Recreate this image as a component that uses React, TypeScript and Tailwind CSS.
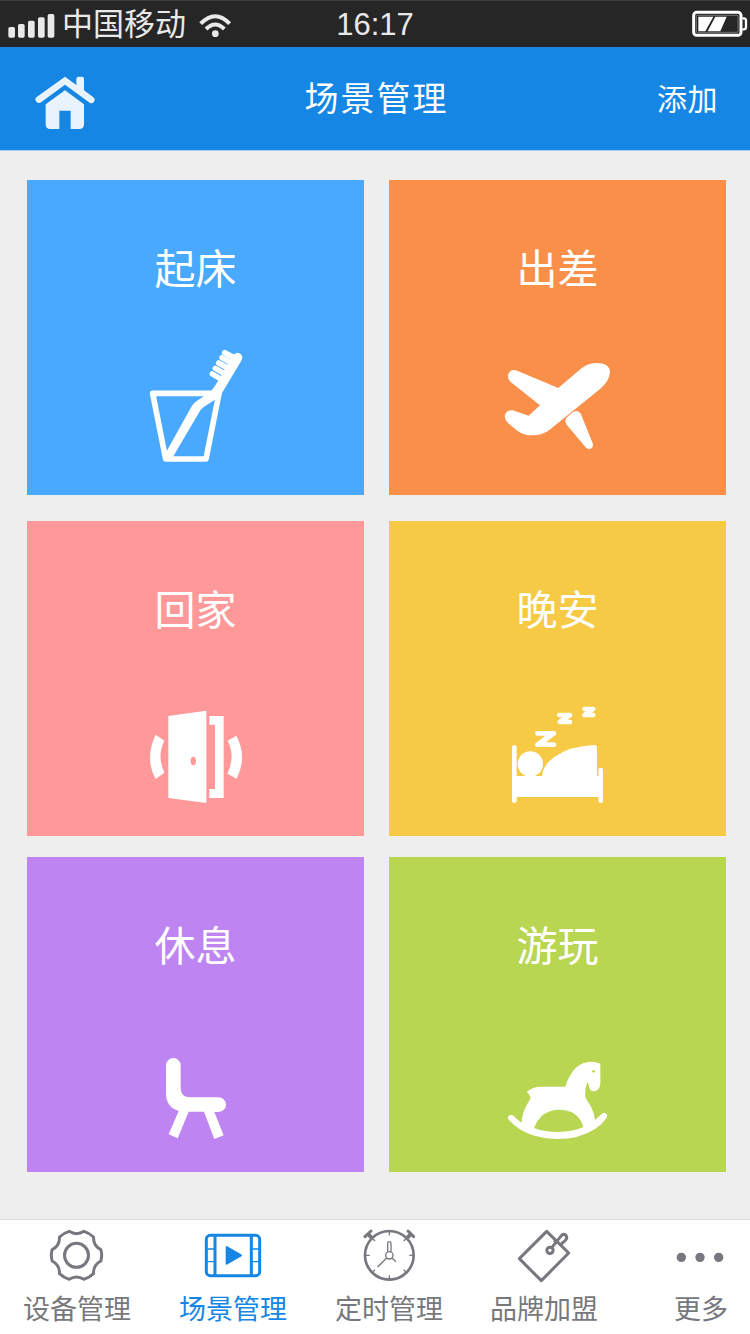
import React from "react";

function SignalIcon() {
  return (
    <svg className="w-12 h-[47px]" viewBox="21 3 144 141" fill="#e9e9e9">
      <rect x="25" y="81" width="20" height="32" rx="5" />
      <rect x="54" y="72" width="20" height="41" rx="5" />
      <rect x="84" y="62" width="20" height="51" rx="5" />
      <rect x="114" y="52" width="20" height="61" rx="5" />
      <rect x="143" y="42" width="20" height="71" rx="5" />
    </svg>
  );
}

function WifiIcon() {
  return (
    <svg className="w-9 h-[47px]" viewBox="591 3 108 141" fill="none" stroke="#e9e9e9" strokeWidth="12">
      <path d="M602 71 Q646 26 689 71" />
      <path d="M618 87 Q646 60 673 87" />
      <circle cx="646" cy="101" r="10" fill="#e9e9e9" stroke="none" />
    </svg>
  );
}

function BatteryIcon() {
  return (
    <svg className="w-[56px] h-[47px]" viewBox="1175 3 168 141">
      <rect x="1180" y="37" width="142" height="69" rx="9" fill="none" stroke="#fff" strokeWidth="9" />
      <rect x="1188" y="46" width="125" height="51" rx="3" fill="none" stroke="#999" strokeWidth="2" />
      <path d="M1326 55h5q6 0 6 7v19q0 7-6 7h-5" fill="none" stroke="#fff" strokeWidth="7" />
      <path d="M1194 50h45l-24 44h-21zM1245 50h34l-19 44h-38z" fill="#fff" />
    </svg>
  );
}

function HomeIcon() {
  return (
    <svg className="w-[60px] h-[56px]" viewBox="106 225 180 168" fill="#e8f3fd">
      <path d="M196 230l34 25v-18q0-7 7-7h10q6 0 6 7v34l28 21q7 6 2 13-5 8-13 3l-74-54-74 54q-8 4-13-4-5-7 2-13z" />
      <path d="M196 271l57 42v60q0 14-14 14h-26v-55h-34v55h-27q-14 0-14-14v-60z" />
    </svg>
  );
}

function BrushIcon() {
  return (
    <svg className="w-[125px] h-[140px]" viewBox="-6 0 375 420" fill="none" stroke="#fff" strokeLinejoin="round" strokeLinecap="round">
      <path d="M53 175H252L213 372H92z" strokeWidth="17" />
      <path d="M84 368L170 214Q176 204 184 199L221 174Q229 168 236 158L251 135L293 62Q300 53 309 53Q320 56 322 66Q322 72 318 79L261 174Q254 185 243 192L205 217L196 226L109 374z" fill="#fff" stroke="none" />
      <path d="M269 53l24 13M261 68l25 14M251 84l25 14M241 100l26 15M232 117l30 18" strokeWidth="16.500" />
    </svg>
  );
}

function PlaneIcon() {
  return (
    <svg className="w-[125px] h-[140px]" viewBox="15 -30 375 420" fill="#fff">
      <path d="M78 76L205 129L268 75Q292 54 318 54Q360 54 360 82Q358 108 331 131L177 256Q157 271 128 271Q103 272 82 257L54 234Q40 219 46 207Q52 194 68 196L116 212L150 181L62 111Q49 98 56 85Q64 72 78 76z" />
      <path d="M231 217L246 203Q263 191 273 208L308 295Q312 307 302 311Q294 314 287 307L230 239Q221 227 231 217z" />
    </svg>
  );
}

function DoorIcon() {
  return (
    <svg className="w-[125px] h-[140px]" viewBox="-6 -57 375 420" fill="#fff">
      <path d="M100 63L214 47V324L100 309z" />
      <path d="M223 63H266V309H223V282H240V89H223z" />
      <path d="M62 119L88 137Q65 184 88 233L62 252Q28 190 62 119z" />
      <path d="M304 122L278 137Q302 184 277 236L305 251Q338 186 304 122z" />
      <ellipse cx="175" cy="198" rx="8" ry="13" fill="#ff9999" />
    </svg>
  );
}

function BedIcon() {
  return (
    <svg className="w-[125px] h-[140px]" viewBox="0 -57 375 420" fill="#fff">
      <circle cx="106" cy="207" r="38" />
      <path d="M51 156q0-6 7-6 7 0 7 6v87h76q2-31 36-56 45-34 121-37 8 0 8 8v85h4v-19q0-6 7-6 7 0 7 6v93q0 7-7 7-7 0-7-7v-11H65v11q0 7-7 7-7 0-7-7z" />
      <g fill="none" stroke="#fff" strokeLinejoin="round" strokeLinecap="round">
        <path d="M127 115H177M127 149H177" strokeWidth="14" />
        <path d="M172 117L132 147" strokeWidth="16" />
        <path d="M193 60H225L194 81H225" strokeWidth="14" />
        <path d="M268 42H295L268 60H295" strokeWidth="13" />
      </g>
    </svg>
  );
}

function ChairIcon() {
  return (
    <svg className="w-[125px] h-[140px]" viewBox="-36 -99 375 420" fill="#fff">
      <path d="M63 61A22 22 0 0 1 107 61V129Q107 157 136 157H221A22 22 0 0 1 221 201H208L236 271L208 282L177 200H131L98 280L71 268L101 198Q63 187 63 145z" />
    </svg>
  );
}

function HorseIcon() {
  return (
    <svg className="w-[125px] h-[140px]" viewBox="0 -99 375 420" fill="#fff">
      <path
        fillRule="evenodd"
        d="M95 141Q113 125 139 125H211Q222 88 243 68Q261 50 291 50Q307 51 316 56V95Q318 125 310 133Q301 141 290 138Q282 133 282 123Q280 114 277 112Q269 130 271 157Q275 166 286 181Q298 203 300 225L321 206Q328 200 334 206Q338 211 335 218Q322 237 300 252Q254 282 186 282Q120 280 77 254Q56 241 41 224Q36 215 43 211Q50 208 56 213Q65 224 80 233Q82 203 94 182Q103 168 107 158Q104 146 95 141zM117 249Q124 230 139 214Q161 194 190 194Q217 195 231 202Q258 217 265 246Q237 260 190 261Q147 261 117 249z"
      />
      <circle cx="296" cy="79" r="4" fill="#b9d653" />
    </svg>
  );
}

function GearIcon() {
  return (
    <svg className="w-20 h-[70px]" viewBox="111 30 240 210" fill="none" stroke="currentColor" strokeWidth="9">
      <g transform="translate(229.500 136)">
        <path
          strokeLinejoin="round"
          d="M73-17Q78 0 73 17Q50 29 51 55Q39 67 22 72Q0 58-22 72Q-39 67-51 55Q-50 29-73 17Q-78 0-73-17Q-50-29-51-55Q-39-67-22-72Q0-58 22-72Q39-67 51-55Q50-29 73-17z"
        />
        <circle r="36" />
      </g>
    </svg>
  );
}

function FilmIcon() {
  return (
    <svg className="w-20 h-[70px]" viewBox="579 30 240 210" fill="none" stroke="currentColor">
      <rect x="619" y="76" width="160" height="121" rx="12" strokeWidth="9" />
      <path d="M645 76v121M754 76v121" strokeWidth="9" />
      <path d="M622 117h20M622 155h20M758 117h20M758 155h20" strokeWidth="4" />
      <path d="M680 111v50l43-25z" fill="currentColor" strokeWidth="6" strokeLinejoin="round" />
    </svg>
  );
}

function ClockIcon() {
  return (
    <svg className="w-20 h-[70px]" viewBox="-3 0 240 210" fill="none" stroke="currentColor">
      <circle cx="118" cy="106" r="73" strokeWidth="8" />
      <path d="M45 50l18-17M174 33l17 17" strokeWidth="9" strokeLinecap="round" />
      <path d="M55 43l10 10M182 43l-10 10" strokeWidth="12" />
      <path d="M118 35v11M118 166v11M48 106h11M178 106h11M69 57l6 6M167 57l-6 6M69 155l6-6M167 155l-6-6" strokeWidth="4" />
      <circle cx="118" cy="106" r="11" strokeWidth="4" />
      <path d="M113 95V70q0-5 5-5t5 5v25" strokeWidth="4" />
      <path d="M110 114l-27 27M126 114l12 11" strokeWidth="4" />
    </svg>
  );
}

function TagIcon() {
  return (
    <svg className="w-20 h-[70px]" viewBox="0 0 240 210" fill="none" stroke="currentColor" strokeWidth="9" strokeLinejoin="round">
      <path d="M46 116L128 34L194 99L112 182z" />
      <circle cx="138" cy="91" r="9.500" />
      <path d="M144 82L172 47Q179 40 186 46Q191 53 185 60L168 76M150 61L160 70" />
    </svg>
  );
}

function MoreIcon() {
  return (
    <svg className="w-20 h-[70px]" viewBox="1026 30 240 210" fill="currentColor">
      <circle cx="1087" cy="142" r="14" />
      <circle cx="1143" cy="142" r="14" />
      <circle cx="1199" cy="142" r="14" />
    </svg>
  );
}

const scenes = [
  { name: "起床", color: "bg-[#48a9ff]", icon: <BrushIcon /> },
  { name: "出差", color: "bg-[#fa8f4a]", icon: <PlaneIcon /> },
  { name: "回家", color: "bg-[#ff9999] mt-[26px]", icon: <DoorIcon /> },
  { name: "晚安", color: "bg-[#f6ca45] mt-[26px]", icon: <BedIcon /> },
  { name: "休息", color: "bg-[#be84f2] mt-[21px]", icon: <ChairIcon /> },
  { name: "游玩", color: "bg-[#b9d653] mt-[21px]", icon: <HorseIcon /> },
];

const tabs = [
  { name: "设备管理", style: "w-[108px] text-[#77787d]", icon: <GearIcon /> },
  { name: "场景管理", style: "w-[108px] text-[#1586e3]", icon: <FilmIcon /> },
  { name: "定时管理", style: "w-[108px] text-[#77787d]", icon: <ClockIcon /> },
  { name: "品牌加盟", style: "w-[108px] -ml-px text-[#77787d]", icon: <TagIcon /> },
  { name: "更多", style: "w-[54px] ml-7 text-[#77787d]", icon: <MoreIcon /> },
];

function App() {
  return (
    <div className="flex flex-col w-[750px] h-[1334px] overflow-hidden bg-[#eeeeee] font-['Liberation_Sans','Noto_Sans_CJK_SC',sans-serif]">
      <div className="flex items-center h-[47px] shrink-0 bg-[#262626] border-t border-[#3c3c3c] text-[#e9e9e9]">
        <div className="flex flex-1 items-center pl-[7px]">
          <SignalIcon />
          <span className="ml-[7px] text-[31px] leading-[47px]">中国移动</span>
          <span className="ml-[11px]">
            <WifiIcon />
          </span>
        </div>
        <span className="pr-[5px] text-[31px] leading-[47px]">16:17</span>
        <div className="flex flex-1 justify-end pr-[2px]">
          <BatteryIcon />
        </div>
      </div>

      <div className="flex items-center h-[104px] shrink-0 bg-[#1586e3] border-b border-[#a9d0f2] text-white">
        <div className="flex-1 pl-[35px] pt-[9px]">
          <HomeIcon />
        </div>
        <h1 className="pt-px text-[34px] leading-[52px] tracking-[2px]">场景管理</h1>
        <div className="flex-1 pt-[3px] pr-8 text-right">
          <button className="text-[30px] leading-[52px] tracking-[0.5px]">添加</button>
        </div>
      </div>

      <div className="grid grid-cols-2 gap-x-[25px] pt-[29px] pl-[27px] pr-6">
        {scenes.map((scene) => (
          <div key={scene.name} className={`flex flex-col items-center h-[315px] pt-[60px] ${scene.color}`}>
            <h3 className="text-[41px] leading-[60px] text-white">{scene.name}</h3>
            <div className="mt-[35px]">{scene.icon}</div>
          </div>
        ))}
      </div>

      <div className="flex gap-12 mt-auto h-[115px] shrink-0 pl-[23px] bg-white border-t border-[#dcdcdc]">
        {tabs.map((tab) => (
          <div key={tab.name} className={`flex flex-col items-center shrink-0 ${tab.style}`}>
            {tab.icon}
            <span className="text-[27px] leading-[40px] whitespace-nowrap">{tab.name}</span>
          </div>
        ))}
      </div>
    </div>
  );
}

export default App;
